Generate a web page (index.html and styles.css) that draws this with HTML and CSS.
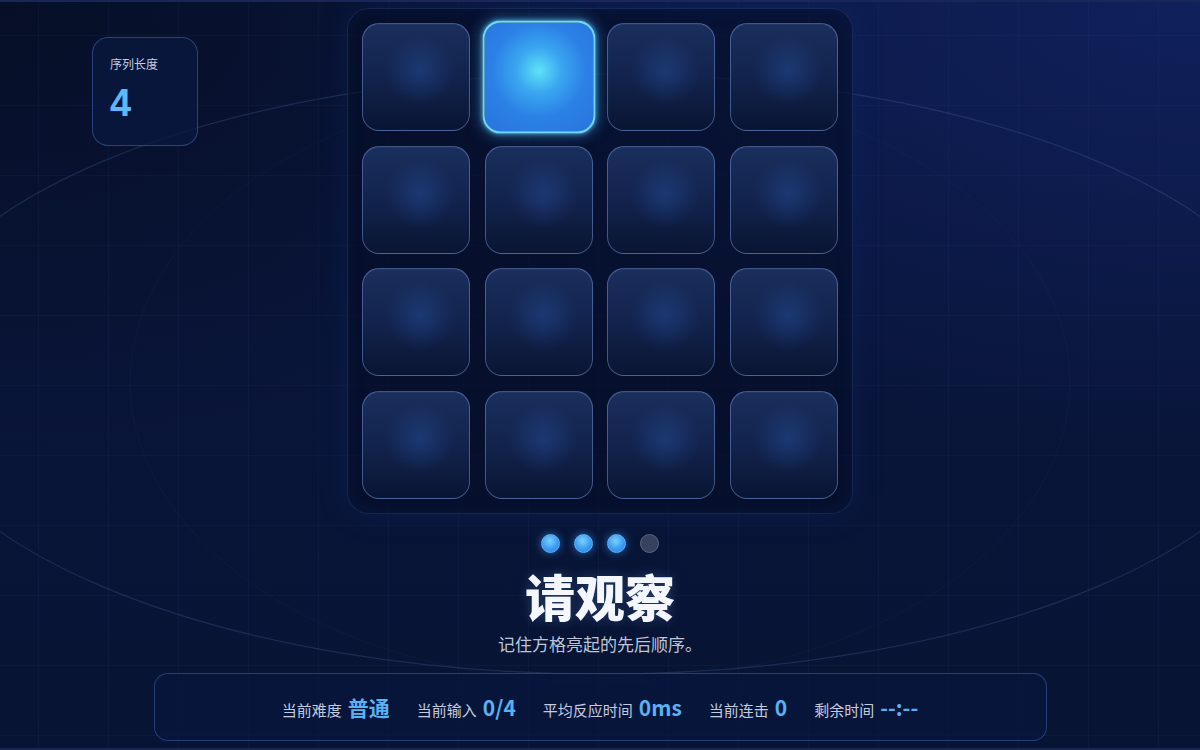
FILE: index.html
```html
<!DOCTYPE html>
<html lang="zh-CN">
<head>
<meta charset="utf-8">
<title>记忆序列</title>
<link rel="stylesheet" href="styles.css">
</head>
<body>
<div class="page">
  <svg class="orbits" width="1200" height="750" viewBox="0 0 1200 750" aria-hidden="true">
    <ellipse cx="600" cy="372" rx="705" ry="300" fill="none" stroke="rgba(90,130,200,0.22)" stroke-width="1.2"/>
    <ellipse cx="600" cy="380" rx="470" ry="300" fill="none" stroke="rgba(90,130,200,0.05)" stroke-width="1"/>
  </svg>

  <div class="top">
    <aside class="side">
      <div class="stat-card">
        <div class="stat-label">序列长度</div>
        <div class="stat-value">4</div>
      </div>
    </aside>

    <div class="board">
      <div class="tile"></div>
      <div class="tile active"></div>
      <div class="tile"></div>
      <div class="tile"></div>
      <div class="tile"></div>
      <div class="tile"></div>
      <div class="tile"></div>
      <div class="tile"></div>
      <div class="tile"></div>
      <div class="tile"></div>
      <div class="tile"></div>
      <div class="tile"></div>
      <div class="tile"></div>
      <div class="tile"></div>
      <div class="tile"></div>
      <div class="tile"></div>
    </div>

    <div class="side"></div>
  </div>

  <div class="dots">
    <span class="dot on"></span>
    <span class="dot on"></span>
    <span class="dot on"></span>
    <span class="dot"></span>
  </div>

  <h1 class="title">请观察</h1>
  <p class="subtitle">记住方格亮起的先后顺序。</p>

  <div class="stats">
    <div class="item"><span class="label">当前难度</span><span class="value">普通</span></div>
    <div class="item"><span class="label">当前输入</span><span class="value">0/4</span></div>
    <div class="item"><span class="label">平均反应时间</span><span class="value">0ms</span></div>
    <div class="item"><span class="label">当前连击</span><span class="value">0</span></div>
    <div class="item"><span class="label">剩余时间</span><span class="value">--:--</span></div>
  </div>
</div>
</body>
</html>
```

FILE: styles.css
```css
* { box-sizing: border-box; }

html, body {
  margin: 0;
  padding: 0;
  width: 1200px;
  height: 750px;
  overflow: hidden;
}

body {
  font-family: "Noto Sans CJK SC", "Noto Sans", "Liberation Sans", sans-serif;
  color: #ffffff;
  background: #091535;
}

.page {
  position: relative;
  width: 1200px;
  height: 750px;
  display: flex;
  flex-direction: column;
  align-items: center;
  border-top: 2px solid #1a2658;
  border-bottom: 2px solid #16244e;
  background:
    linear-gradient(90deg, rgba(80,110,180,0.06) 1px, transparent 1px) 38px 34px / 70px 70px,
    linear-gradient(0deg, rgba(80,110,180,0.06) 1px, transparent 1px) 38px 34px / 70px 70px,
    radial-gradient(ellipse 70% 60% at 100% 0%, #10205a 0%, rgba(16,32,90,0) 100%),
    radial-gradient(ellipse 60% 60% at 0% 0%, #060f26 0%, rgba(6,15,38,0) 100%),
    linear-gradient(180deg, #0a1640 0%, #081433 100%);
}

.orbits {
  position: absolute;
  left: 0;
  top: 0;
  pointer-events: none;
  z-index: 0;
}

.top {
  position: relative;
  z-index: 1;
  width: 100%;
  display: grid;
  grid-template-columns: 1fr auto 1fr;
  margin-top: 6px;
}

.side {
  min-width: 0;
}

.stat-card {
  margin-top: 29px;
  margin-left: 92px;
  width: 106px;
  height: 109px;
  border: 1px solid rgba(72,112,190,0.5);
  border-radius: 16px;
  background: rgba(9,24,64,0.75);
  padding: 17px 0 0 17px;
}

.stat-label {
  font-size: 12px;
  line-height: 18px;
  color: #c3cce0;
}

.stat-value {
  margin-top: 10px;
  font-size: 38px;
  line-height: 40px;
  font-weight: 700;
  color: #5cb8f6;
  font-family: "Liberation Sans", "Noto Sans CJK SC", sans-serif;
}

.board {
  display: grid;
  grid-template-columns: repeat(4, 108px);
  grid-auto-rows: 108px;
  gap: 14.5px;
  padding: 14px;
  border-radius: 22px;
  border: 1px solid rgba(60,100,170,0.28);
  background: rgba(5,14,38,0.6);
  box-shadow: 0 0 30px rgba(20,60,140,0.22), inset 0 0 20px rgba(30,70,150,0.1);
}

.tile {
  border-radius: 17px;
  border: 1px solid rgba(120,150,215,0.5);
  background:
    radial-gradient(circle at 54% 44%, rgba(34,70,140,0.6) 0%, rgba(34,70,140,0) 42%),
    linear-gradient(180deg, #1a2f5d 0%, #12234d 50%, #0a1533 100%);
  box-shadow: inset 0 1px 0 rgba(150,180,240,0.06);
}

.tile.active {
  transform: scale(1.045);
  border: 2px solid #6fd6f6;
  background:
    radial-gradient(circle at 50% 44%, #5fe2f8 0%, #3aa6f0 28%, #2b80e6 58%, #2a74dc 100%);
  box-shadow: 0 0 14px rgba(70,180,255,0.55), 0 0 4px rgba(120,220,255,0.6);
}

.dots {
  position: relative;
  z-index: 1;
  display: flex;
  gap: 14px;
  margin-top: 20px;
}

.dot {
  width: 19px;
  height: 19px;
  border-radius: 50%;
  background: #37415e;
  border: 1px solid #5b6683;
}

.dot.on {
  border: 1px solid #5fb6ff;
  background: radial-gradient(circle at 45% 35%, #7bd0ff 0%, #3c9cf2 55%, #2a7fe3 100%);
  box-shadow: 0 0 8px rgba(60,160,255,0.6);
}

.title {
  position: relative;
  z-index: 1;
  margin: 15px 0 0;
  font-size: 50px;
  line-height: 54px;
  font-weight: 900;
  letter-spacing: 0;
  color: #f4f7ff;
  text-shadow: 0 0 12px rgba(120,170,255,0.25);
}

.subtitle {
  position: relative;
  z-index: 1;
  margin: 11px 0 0;
  font-size: 17px;
  line-height: 22px;
  color: #bcc5da;
}

.stats {
  position: relative;
  z-index: 1;
  margin-top: 18px;
  width: 893px;
  height: 68px;
  border: 1px solid rgba(72,112,190,0.45);
  border-radius: 14px;
  background: rgba(8,22,62,0.7);
  display: flex;
  justify-content: center;
  align-items: center;
  gap: 27px;
}

.item {
  display: flex;
  align-items: baseline;
  gap: 6px;
}

.label {
  font-size: 15px;
  color: #c3cbdf;
}

.value {
  font-size: 21px;
  font-weight: 700;
  color: #58b2f2;
}
```
